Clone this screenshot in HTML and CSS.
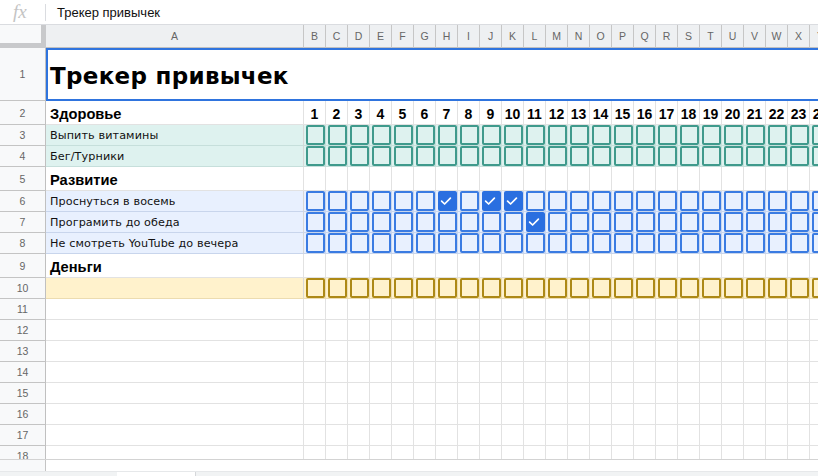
FILE: index.html
```html
<!DOCTYPE html>
<html lang="ru">
<head>
<meta charset="utf-8">
<title>Трекер привычек</title>
<link rel="stylesheet" href="styles.css">
</head>
<body>
<div class="formula"><span class="fx">fx</span><span class="fsep"></span><span class="fval">Трекер привычек</span></div>
<div class="sheet">
  <div class="row hdr">
    <div class="corner"></div>
    <div class="ca">A</div>
    <div class="cols"><span>B</span><span>C</span><span>D</span><span>E</span><span>F</span><span>G</span><span>H</span><span>I</span><span>J</span><span>K</span><span>L</span><span>M</span><span>N</span><span>O</span><span>P</span><span>Q</span><span>R</span><span>S</span><span>T</span><span>U</span><span>V</span><span>W</span><span>X</span><span>Y</span></div>
  </div>
  <div class="row r1">
    <div class="rh">1</div>
    <div class="title">Трекер привычек</div>
  </div>
  <div class="row cat">
    <div class="rh">2</div>
    <div class="a">Здоровье</div>
    <div class="days nums"><span>1</span><span>2</span><span>3</span><span>4</span><span>5</span><span>6</span><span>7</span><span>8</span><span>9</span><span>10</span><span>11</span><span>12</span><span>13</span><span>14</span><span>15</span><span>16</span><span>17</span><span>18</span><span>19</span><span>20</span><span>21</span><span>22</span><span>23</span><span>24</span></div>
  </div>
  <div class="row hab teal">
    <div class="rh">3</div>
    <div class="a">Выпить витамины</div>
    <div class="days"><i></i><i></i><i></i><i></i><i></i><i></i><i></i><i></i><i></i><i></i><i></i><i></i><i></i><i></i><i></i><i></i><i></i><i></i><i></i><i></i><i></i><i></i><i></i><i></i></div>
  </div>
  <div class="row hab teal">
    <div class="rh">4</div>
    <div class="a">Бег/Турники</div>
    <div class="days"><i></i><i></i><i></i><i></i><i></i><i></i><i></i><i></i><i></i><i></i><i></i><i></i><i></i><i></i><i></i><i></i><i></i><i></i><i></i><i></i><i></i><i></i><i></i><i></i></div>
  </div>
  <div class="row cat">
    <div class="rh">5</div>
    <div class="a">Развитие</div>
    <div class="days empty"></div>
  </div>
  <div class="row hab blue">
    <div class="rh">6</div>
    <div class="a">Проснуться в восемь</div>
    <div class="days"><i></i><i></i><i></i><i></i><i></i><i></i><i class="on"><svg viewBox="0 0 16 16"><polyline points="3.6,8.2 6.6,11 12.4,5.2"/></svg></i><i></i><i class="on"><svg viewBox="0 0 16 16"><polyline points="3.6,8.2 6.6,11 12.4,5.2"/></svg></i><i class="on"><svg viewBox="0 0 16 16"><polyline points="3.6,8.2 6.6,11 12.4,5.2"/></svg></i><i></i><i></i><i></i><i></i><i></i><i></i><i></i><i></i><i></i><i></i><i></i><i></i><i></i><i></i></div>
  </div>
  <div class="row hab blue">
    <div class="rh">7</div>
    <div class="a">Програмить до обеда</div>
    <div class="days"><i></i><i></i><i></i><i></i><i></i><i></i><i></i><i></i><i></i><i></i><i class="on"><svg viewBox="0 0 16 16"><polyline points="3.6,8.2 6.6,11 12.4,5.2"/></svg></i><i></i><i></i><i></i><i></i><i></i><i></i><i></i><i></i><i></i><i></i><i></i><i></i><i></i></div>
  </div>
  <div class="row hab blue">
    <div class="rh">8</div>
    <div class="a">Не смотреть YouTube до вечера</div>
    <div class="days"><i></i><i></i><i></i><i></i><i></i><i></i><i></i><i></i><i></i><i></i><i></i><i></i><i></i><i></i><i></i><i></i><i></i><i></i><i></i><i></i><i></i><i></i><i></i><i></i></div>
  </div>
  <div class="row cat">
    <div class="rh">9</div>
    <div class="a">Деньги</div>
    <div class="days empty"></div>
  </div>
  <div class="row hab yellow">
    <div class="rh">10</div>
    <div class="a"></div>
    <div class="days"><i></i><i></i><i></i><i></i><i></i><i></i><i></i><i></i><i></i><i></i><i></i><i></i><i></i><i></i><i></i><i></i><i></i><i></i><i></i><i></i><i></i><i></i><i></i><i></i></div>
  </div>
  <div class="row blank"><div class="rh">11</div><div class="a"></div><div class="days empty"></div></div>
  <div class="row blank"><div class="rh">12</div><div class="a"></div><div class="days empty"></div></div>
  <div class="row blank"><div class="rh">13</div><div class="a"></div><div class="days empty"></div></div>
  <div class="row blank"><div class="rh">14</div><div class="a"></div><div class="days empty"></div></div>
  <div class="row blank"><div class="rh">15</div><div class="a"></div><div class="days empty"></div></div>
  <div class="row blank"><div class="rh">16</div><div class="a"></div><div class="days empty"></div></div>
  <div class="row blank"><div class="rh">17</div><div class="a"></div><div class="days empty"></div></div>
  <div class="row blank"><div class="rh">18</div><div class="a"></div><div class="days empty"></div></div>
</div>
<div class="hscroll"><div class="hs-head"></div></div>
<div class="tabs"><div class="tab"></div></div>
</body>
</html>
```

FILE: styles.css
```css
* { box-sizing: border-box; }
html, body { margin: 0; padding: 0; }
body {
  width: 818px;
  height: 476px;
  overflow: hidden;
  background: #fff;
  font-family: "Liberation Sans", Arial, sans-serif;
  color: #000;
}

/* formula bar */
.formula {
  height: 25px;
  display: flex;
  align-items: center;
  border-bottom: 1px solid #dadce0;
}
.fx {
  width: 45px;
  padding-left: 13px;
  font-family: "Liberation Serif", serif;
  font-style: italic;
  font-size: 19px;
  color: #c4c4c4;
  line-height: 1;
  margin-top: -2px;
}
.fsep {
  width: 1px;
  height: 17px;
  background: #dadce0;
}
.fval {
  padding-left: 11px;
  font-size: 13px;
  color: #111;
}

/* sheet */
.sheet {
  height: 435px;
  overflow: hidden;
  border-bottom: 1px solid #d3d3d3;
}
.row {
  display: flex;
  height: 21px;
  width: max-content;
}
.row > div { height: 100%; flex: none; }

.hdr { height: 23px; }
.r1 { height: 53px; }
.cat { height: 24px; }

.corner {
  width: 46px;
  background: #f8f9fa;
  border-right: 5px solid #c8c9cb;
  border-bottom: 5px solid #c8c9cb;
}
.ca, .cols span {
  display: flex;
  align-items: center;
  justify-content: center;
  background: #eef0f2;
  border-right: 1px solid #c6c6c6;
  border-bottom: 1px solid #c0c0c0;
  font-size: 10.5px;
  color: #666;
}
.ca { width: 258px; }
.cols { display: flex; }
.cols span { width: 22px; height: 100%; }

.rh {
  width: 46px;
  display: flex;
  align-items: center;
  justify-content: center;
  background: #f8f9fa;
  border-right: 1px solid #c0c0c0;
  border-bottom: 1px solid #c4c4c4;
  font-size: 10.5px;
  color: #666;
}

.title {
  width: 800px;
  border: 2px solid #2f74de;
  display: flex;
  align-items: center;
  padding-left: 2px;
  padding-top: 2px;
  font-family: "DejaVu Sans", Verdana, sans-serif;
  font-weight: bold;
  font-size: 23px;
  letter-spacing: 0.3px;
}

.a {
  width: 258px;
  display: flex;
  align-items: flex-end;
  padding: 0 3px 3px 4px;
  border-right: 1px solid #e2e2e2;
  border-bottom: 1px solid #e2e2e2;
  font-family: "DejaVu Sans", Verdana, sans-serif;
  font-size: 11.2px;
  letter-spacing: 0.1px;
  color: #111;
  white-space: nowrap;
}
.cat .a {
  font-family: "Liberation Sans", Arial, sans-serif;
  font-weight: bold;
  font-size: 14.67px;
  letter-spacing: 0;
  color: #000;
  padding-bottom: 2px;
}

.days {
  display: flex;
  width: 528px;
  border-bottom: 1px solid #e2e2e2;
}
.days.empty {
  background-image: linear-gradient(to right, transparent 21px, #e2e2e2 21px);
  background-size: 22px 100%;
}
.nums span {
  width: 22px;
  display: flex;
  align-items: flex-end;
  justify-content: center;
  padding-bottom: 2px;
  border-right: 1px solid #e2e2e2;
  font-weight: bold;
  font-size: 14px;
}

.days i {
  width: 22px;
  height: 100%;
  display: flex;
  align-items: center;
  padding-left: 2px;
  border-right: 1px solid #e2e2e2;
  position: relative;
}
.days i::before {
  content: "";
  display: block;
  width: 16px;
  height: 16px;
  border: 2px solid currentColor;
  border-radius: 2px;
}
.days i.on::before { background: currentColor; }
.days i svg {
  position: absolute;
  left: 2px;
  top: 2px;
  width: 16px;
  height: 16px;
}
.days i svg polyline {
  fill: none;
  stroke: #fff;
  stroke-width: 1.7;
  stroke-linecap: round;
  stroke-linejoin: round;
}

.teal .a, .teal .days { background: #def2ef; border-bottom-color: #c6dfdb; }
.teal .days i { color: #3f9a8c; border-right-color: #c6dfdb; }
.blue .a, .blue .days { background: #e8f0fe; border-bottom-color: #c8d5ec; }
.blue .days i { color: #3a7be2; border-right-color: #c8d5ec; }
.blue .days i.on { color: #2a6fe0; }
.yellow .a, .yellow .days { background: #fff2cc; border-bottom-color: #ecdcb0; }
.yellow .days i { color: #ad8916; border-right-color: #ecdcb0; }
.teal .a, .blue .a, .yellow .a { border-right-color: #d8d8d8; }

/* bottom */
.hscroll {
  height: 11px;
  display: flex;
}
.hs-head {
  width: 46px;
  background: #f8f9fa;
  border-right: 1px solid #c4c4c4;
}
.tabs {
  height: 30px;
  background: #f1f3f4;
  border-top: 1px solid #e6e8ea;
  display: flex;
}
.tab {
  margin-left: 117px;
  width: 79px;
  background: #fff;
  border-right: 1px solid #d5d7da;
}
```
